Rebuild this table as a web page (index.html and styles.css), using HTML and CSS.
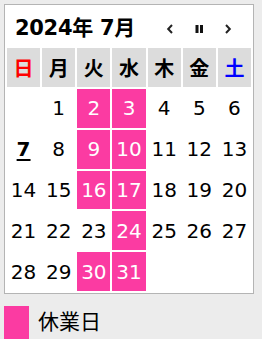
FILE: index.html
```html
<!DOCTYPE html>
<html lang="ja">
<head>
<meta charset="utf-8">
<link rel="stylesheet" href="styles.css">
</head>
<body>
<div class="cal">
  <div class="cal-head">
    <div class="title">2024年 7月</div>
    <div class="nav">
      <span class="btn"><svg width="8" height="10" viewBox="0 0 8 10"><path d="M6 1 L2.2 5 L6 9" fill="none" stroke="#222" stroke-width="2"/></svg></span>
      <span class="btn"><svg width="8" height="10" viewBox="0 0 8 10"><rect x="0.5" y="1" width="3" height="8" fill="#111"/><rect x="5" y="1" width="3" height="8" fill="#111"/></svg></span>
      <span class="btn"><svg width="8" height="10" viewBox="0 0 8 10"><path d="M2 1 L5.8 5 L2 9" fill="none" stroke="#222" stroke-width="2"/></svg></span>
    </div>
  </div>
  <table class="grid">
    <thead>
      <tr><th class="sun">日</th><th>月</th><th>火</th><th>水</th><th>木</th><th>金</th><th class="sat">土</th></tr>
    </thead>
    <tbody>
      <tr><td></td><td>1</td><td class="off">2</td><td class="off">3</td><td>4</td><td>5</td><td>6</td></tr>
      <tr><td class="today">7</td><td>8</td><td class="off">9</td><td class="off">10</td><td>11</td><td>12</td><td>13</td></tr>
      <tr><td>14</td><td>15</td><td class="off">16</td><td class="off">17</td><td>18</td><td>19</td><td>20</td></tr>
      <tr><td>21</td><td>22</td><td>23</td><td class="off">24</td><td>25</td><td>26</td><td>27</td></tr>
      <tr><td>28</td><td>29</td><td class="off">30</td><td class="off">31</td><td></td><td></td><td></td></tr>
    </tbody>
  </table>
</div>
<div class="legend">
  <span class="swatch"></span>
  <span class="legend-text">休業日</span>
</div>
</body>
</html>
```

FILE: styles.css
```css
html, body {
  margin: 0;
  padding: 0;
  background: #ececec;
  font-family: "DejaVu Sans", "Noto Sans CJK JP", sans-serif;
  color: #000;
  overflow: hidden;
}

.cal {
  margin: 4px 0 0 4px;
  width: 248px;
  background: #fff;
  border: 1px solid #b4b4b4;
}

.cal-head {
  height: 41px;
  display: flex;
  align-items: center;
  justify-content: space-between;
}

.title {
  margin-left: 10px;
  margin-top: 1px;
  font-size: 21px;
  font-weight: bold;
  letter-spacing: -0.3px;
}

.nav {
  display: flex;
  gap: 21px;
  margin-right: 21px;
  margin-top: 6px;
}

.btn {
  display: flex;
  width: 8px;
  height: 10px;
}

.grid {
  width: 248px;
  table-layout: fixed;
  border-collapse: separate;
  border-spacing: 2px;
}

.grid th {
  height: 39px;
  padding: 0;
  background: #dcdcdc;
  font-family: "Noto Sans CJK JP", sans-serif;
  font-size: 20px;
  font-weight: bold;
  text-align: center;
  vertical-align: middle;
}

.grid th.sun { color: #ff0000; }
.grid th.sat { color: #0000ff; }

.grid td {
  height: 38.8px;
  padding: 0;
  font-size: 20px;
  text-align: center;
  vertical-align: middle;
}

.grid td.off {
  background: #fb3ba2;
  color: #fff;
}

.grid td.today {
  font-weight: bold;
  text-decoration: underline;
  text-underline-offset: 3px;
}

.legend {
  display: flex;
  align-items: flex-start;
  margin: 12px 0 0 4px;
}

.swatch {
  width: 25px;
  height: 36px;
  background: #fb3ba2;
  flex: none;
}

.legend-text {
  margin-left: 9px;
  font-family: "Noto Sans CJK JP", sans-serif;
  font-size: 21px;
  line-height: 28px;
}
```
